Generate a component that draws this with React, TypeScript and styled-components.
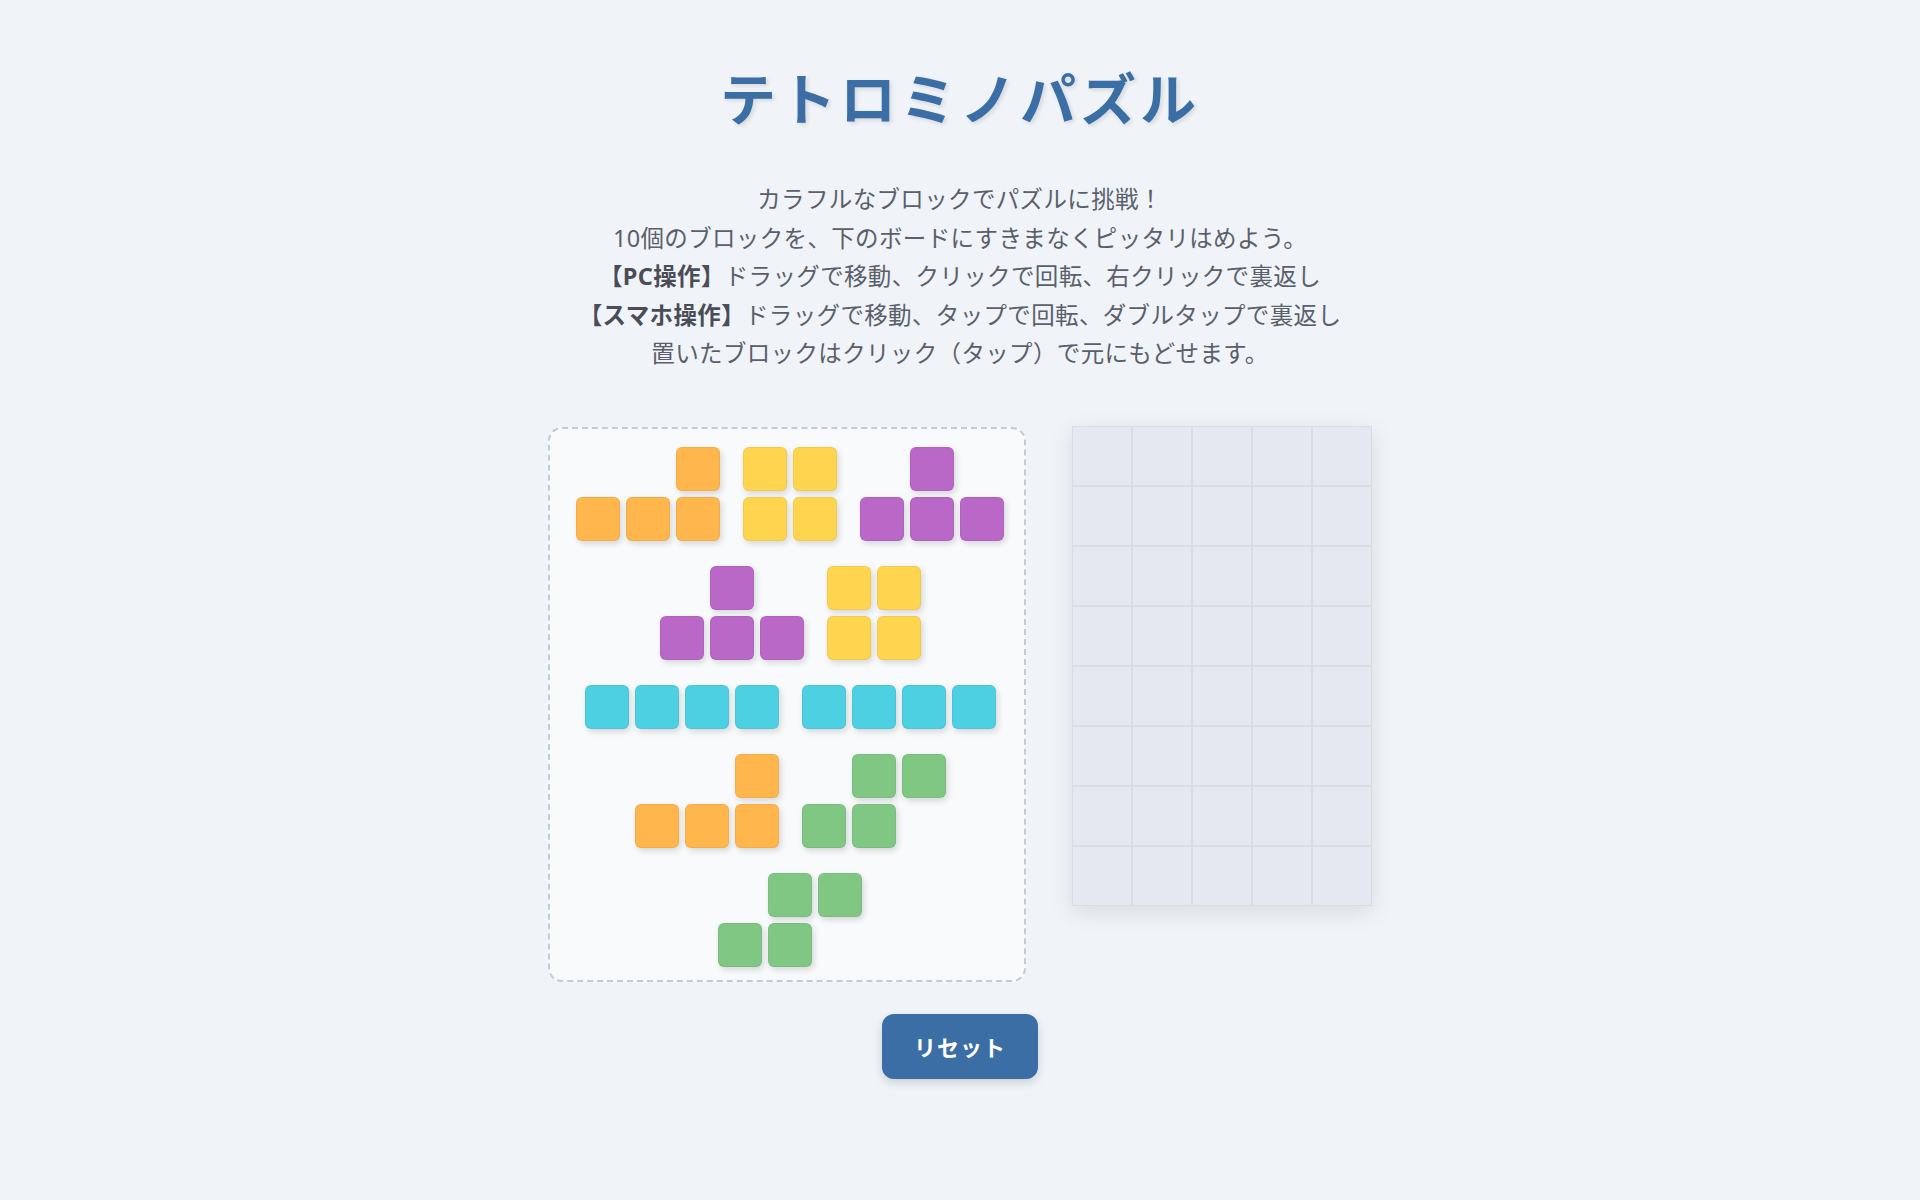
import styled, { createGlobalStyle } from "styled-components"

const GlobalStyle = createGlobalStyle`
  body {
    margin: 0;
    background: #f0f4f8;
    font-family: "Noto Sans", "Noto Sans CJK JP", sans-serif;
  }
`

const Page = styled.div`
  display: flex;
  flex-direction: column;
  align-items: center;
  padding: 62px 0 80px;
`

const Title = styled.h1`
  margin: 0;
  font-family: "Noto Sans CJK JP", sans-serif;
  font-size: 56px;
  line-height: 1.2;
  font-weight: 700;
  letter-spacing: 4px;
  color: #3a6ea5;
  text-shadow: 2px 2px 4px rgba(0, 0, 0, 0.12);
`

const Description = styled.p`
  margin: 51px 0 54px;
  font-size: 23.5px;
  line-height: 38.5px;
  letter-spacing: 0.35px;
  color: #5a5f6b;
  text-align: center;

  strong {
    color: #4a4d57;
    font-weight: 700;
  }
`

const GameArea = styled.div`
  display: flex;
  align-items: flex-start;
  gap: 46px;
`

const Tray = styled.div`
  box-sizing: border-box;
  width: 478px;
  min-height: 555px;
  padding: 18px 18px 13px 24px;
  border: 2px dashed #c3cbd6;
  border-radius: 14px;
  background: #f8fafc;
  display: flex;
  flex-wrap: wrap;
  justify-content: center;
  align-content: flex-start;
  column-gap: 23px;
  row-gap: 25px;
`

const PieceGrid = styled.div<{ $cols: number }>`
  display: grid;
  grid-template-columns: repeat(${(p) => p.$cols}, 44px);
  grid-auto-rows: 44px;
  gap: 6px;
  cursor: grab;
`

const Block = styled.div<{ $color: string; $row: number; $col: number }>`
  grid-row: ${(p) => p.$row + 1};
  grid-column: ${(p) => p.$col + 1};
  box-sizing: border-box;
  border-radius: 6px;
  background: ${(p) => p.$color};
  border: 1px solid rgba(0, 0, 0, 0.05);
  box-shadow: 2px 3px 6px rgba(0, 0, 0, 0.14);
`

const Board = styled.div`
  display: grid;
  grid-template-columns: repeat(5, 60px);
  grid-template-rows: repeat(8, 60px);
  margin-top: -1px;
  box-shadow: 0 6px 22px rgba(0, 0, 0, 0.1);
`

const BoardCell = styled.div`
  box-sizing: border-box;
  border: 1px solid #d8dce3;
  background: #e5e8f0;
`

const ResetButton = styled.button`
  margin-top: 32px;
  padding: 16px 32px;
  border: none;
  border-radius: 12px;
  background: #3a6ea5;
  color: #fff;
  font-family: "Noto Sans CJK JP", sans-serif;
  font-size: 22px;
  font-weight: 700;
  line-height: 33px;
  letter-spacing: 1px;
  box-shadow: 0 4px 10px rgba(0, 0, 0, 0.15);
  cursor: pointer;
`

const COLORS = {
  orange: "#ffb74d",
  yellow: "#ffd54f",
  purple: "#ba68c8",
  cyan: "#4dd0e1",
  green: "#81c784",
}

type Shape = [number, number][]

const SHAPES: Record<string, Shape> = {
  L: [[0, 2], [1, 0], [1, 1], [1, 2]],
  O: [[0, 0], [0, 1], [1, 0], [1, 1]],
  T: [[0, 1], [1, 0], [1, 1], [1, 2]],
  I: [[0, 0], [0, 1], [0, 2], [0, 3]],
  S: [[0, 1], [0, 2], [1, 0], [1, 1]],
}

const pieces: { id: number; shape: string; color: string }[] = [
  { id: 1, shape: "L", color: COLORS.orange },
  { id: 2, shape: "O", color: COLORS.yellow },
  { id: 3, shape: "T", color: COLORS.purple },
  { id: 4, shape: "T", color: COLORS.purple },
  { id: 5, shape: "O", color: COLORS.yellow },
  { id: 6, shape: "I", color: COLORS.cyan },
  { id: 7, shape: "I", color: COLORS.cyan },
  { id: 8, shape: "L", color: COLORS.orange },
  { id: 9, shape: "S", color: COLORS.green },
  { id: 10, shape: "S", color: COLORS.green },
]

const Piece = ({ shape, color }: { shape: string; color: string }) => {
  const cells = SHAPES[shape]
  const cols = Math.max(...cells.map(([, c]) => c)) + 1
  return (
    <PieceGrid $cols={cols}>
      {cells.map(([r, c]) => (
        <Block key={`${r}-${c}`} $row={r} $col={c} $color={color} />
      ))}
    </PieceGrid>
  )
}

export default function App() {
  return (
    <>
      <GlobalStyle />
      <Page>
        <Title>テトロミノパズル</Title>
        <Description>
          カラフルなブロックでパズルに挑戦！
          <br />
          10個のブロックを、下のボードにすきまなくピッタリはめよう。
          <br />
          <strong>【PC操作】</strong>ドラッグで移動、クリックで回転、右クリックで裏返し
          <br />
          <strong>【スマホ操作】</strong>ドラッグで移動、タップで回転、ダブルタップで裏返し
          <br />
          置いたブロックはクリック（タップ）で元にもどせます。
        </Description>
        <GameArea>
          <Tray>
            {pieces.map((p) => (
              <Piece key={p.id} shape={p.shape} color={p.color} />
            ))}
          </Tray>
          <Board>
            {Array.from({ length: 40 }, (_, i) => (
              <BoardCell key={i} />
            ))}
          </Board>
        </GameArea>
        <ResetButton>リセット</ResetButton>
      </Page>
    </>
  )
}
